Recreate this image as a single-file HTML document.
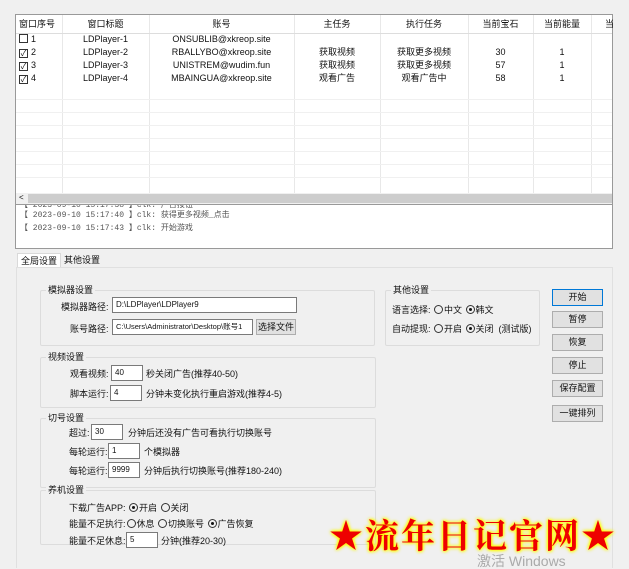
<!DOCTYPE html><html><head><meta charset="utf-8"><style>
*{box-sizing:border-box;margin:0;padding:0}
body{width:629px;height:568px;background:#f0f0f0;font-family:"Liberation Sans","Noto Sans CJK SC",sans-serif;font-size:9px;line-height:12px;color:#111;position:relative;overflow:hidden}
.a{position:absolute;white-space:nowrap}
.tbl{left:15px;top:14px;width:598px;height:191px;background:#fff;border:1px solid #999}
.vl{position:absolute;top:0;height:178px;width:1px;background:#e8e8e8}
.hl{position:absolute;left:0;width:596px;height:1px;background:#f0f0f0}
.c{position:absolute;text-align:center;font-size:9px;line-height:12px;white-space:nowrap}
.cb{display:inline-block;width:9px;height:9px;border:1px solid #333;vertical-align:-1px;margin-right:3px;font-size:8px;line-height:7px;text-align:center}
.grp{position:absolute;border:1px solid #dcdcdc;border-radius:2px}
.gt{position:absolute;top:-7px;left:5px;background:#f0f0f0;padding:0 2px}
.in{position:absolute;background:#fff;border:1px solid #7a7a7a;height:16px;padding:1px 3px;font-size:8px;line-height:12px;white-space:nowrap;overflow:hidden}
.btn{position:absolute;left:552px;width:51px;height:17px;border:1px solid #adadad;background:#e1e1e1;text-align:center;line-height:15px}
.r{display:inline-block;width:9px;height:9px;border:1px solid #333;border-radius:50%;vertical-align:-1px;position:relative;margin:0 1px}
.r.on::after{content:"";position:absolute;left:2px;top:2px;width:3px;height:3px;border-radius:50%;background:#111}
</style></head><body>
<div class="a tbl">
<div class="vl" style="left:46px"></div><div class="vl" style="left:133px"></div><div class="vl" style="left:278px"></div><div class="vl" style="left:364px"></div><div class="vl" style="left:452px"></div><div class="vl" style="left:517px"></div><div class="vl" style="left:575px"></div>
<div class="hl" style="top:18px;background:#ddd"></div>
<div class="hl" style="top:84px"></div><div class="hl" style="top:97px"></div><div class="hl" style="top:110px"></div><div class="hl" style="top:123px"></div><div class="hl" style="top:136px"></div><div class="hl" style="top:149px"></div><div class="hl" style="top:162px"></div>
<div class="c" style="left:3px;top:3px">窗口序号</div>
<div class="c" style="left:46px;width:87px;top:3px">窗口标题</div>
<div class="c" style="left:133px;width:145px;top:3px">账号</div>
<div class="c" style="left:278px;width:86px;top:3px">主任务</div>
<div class="c" style="left:364px;width:88px;top:3px">执行任务</div>
<div class="c" style="left:452px;width:65px;top:3px">当前宝石</div>
<div class="c" style="left:517px;width:58px;top:3px">当前能量</div>
<div class="c" style="left:589px;top:3px">当</div>
<div class="c" style="left:3px;top:18px"><span class="cb"></span>1</div>
<div class="c" style="left:3px;top:31px"><span class="cb">✓</span>2</div>
<div class="c" style="left:3px;top:44px"><span class="cb">✓</span>3</div>
<div class="c" style="left:3px;top:57px"><span class="cb">✓</span>4</div>
<div class="c" style="left:46px;width:87px;top:18px">LDPlayer-1</div>
<div class="c" style="left:46px;width:87px;top:31px">LDPlayer-2</div>
<div class="c" style="left:46px;width:87px;top:44px">LDPlayer-3</div>
<div class="c" style="left:46px;width:87px;top:57px">LDPlayer-4</div>
<div class="c" style="left:133px;width:145px;top:18px">ONSUBLIB@xkreop.site</div>
<div class="c" style="left:133px;width:145px;top:31px">RBALLYBO@xkreop.site</div>
<div class="c" style="left:133px;width:145px;top:44px">UNISTREM@wudim.fun</div>
<div class="c" style="left:133px;width:145px;top:57px">MBAINGUA@xkreop.site</div>
<div class="c" style="left:278px;width:86px;top:31px">获取视频</div>
<div class="c" style="left:278px;width:86px;top:44px">获取视频</div>
<div class="c" style="left:278px;width:86px;top:57px">观看广告</div>
<div class="c" style="left:364px;width:88px;top:31px">获取更多视频</div>
<div class="c" style="left:364px;width:88px;top:44px">获取更多视频</div>
<div class="c" style="left:364px;width:88px;top:57px">观看广告中</div>
<div class="c" style="left:452px;width:65px;top:31px">30</div>
<div class="c" style="left:452px;width:65px;top:44px">57</div>
<div class="c" style="left:452px;width:65px;top:57px">58</div>
<div class="c" style="left:517px;width:58px;top:31px">1</div>
<div class="c" style="left:517px;width:58px;top:44px">1</div>
<div class="c" style="left:517px;width:58px;top:57px">1</div>
<div style="position:absolute;left:0;top:178px;width:596px;height:11px;background:#f0f0f0"><div style="position:absolute;left:12px;top:1px;width:584px;height:9px;background:#cdcdcd"></div><span style="position:absolute;left:3px;top:0;font-size:8px;line-height:10px">&lt;</span></div>
</div>
<div class="a" style="left:15px;top:205px;width:598px;height:44px;background:#fff;border:1px solid #999;border-top:0;font-family:'Liberation Mono','Noto Sans CJK SC',monospace;font-size:8px;color:#555;padding-left:4px;line-height:13px">
<div style="height:4px;overflow:hidden;line-height:1px">【 2023-09-10 15:17:38 】clk: 广告按钮</div>
<div>【 2023-09-10 15:17:40 】clk: 获得更多视频_点击</div>
<div>【 2023-09-10 15:17:43 】clk: 开始游戏</div></div>
<div class="a" style="left:17px;top:253px;width:44px;height:14px;background:#fff;border:1px solid #d9d9d9;border-bottom:0;padding:1px 3px">全局设置</div>
<div class="a" style="left:64px;top:254px">其他设置</div>
<div class="a" style="left:16px;top:267px;width:597px;height:301px;background:#f0f0f0;border:1px solid #e0e0e0;border-bottom:0"></div>
<div class="grp" style="left:40px;top:290px;width:335px;height:56px"><span class="gt">模拟器设置</span></div>
<div class="a" style="left:61px;top:301px">模拟器路径:</div><div class="in" style="left:112px;top:297px;width:185px">D:\LDPlayer\LDPlayer9</div>
<div class="a" style="left:70px;top:323px">账号路径:</div><div class="in" style="left:112px;top:319px;width:141px;font-size:7.5px">C:\Users\Administrator\Desktop\账号1</div>
<div class="a" style="left:256px;top:319px;width:40px;height:16px;border:1px solid #adadad;background:#e1e1e1;text-align:center;line-height:14px">选择文件</div>
<div class="grp" style="left:385px;top:290px;width:155px;height:56px"><span class="gt">其他设置</span></div>
<div class="a" style="left:392px;top:304px">语言选择: <span class="r"></span>中文 <span class="r on"></span>韩文</div>
<div class="a" style="left:392px;top:323px">自动提现: <span class="r"></span>开启 <span class="r on"></span>关闭 &nbsp;(测试版)</div>
<div class="btn" style="top:289px;border-color:#0078d7">开始</div>
<div class="btn" style="top:311px">暂停</div>
<div class="btn" style="top:334px">恢复</div>
<div class="btn" style="top:357px">停止</div>
<div class="btn" style="top:380px">保存配置</div>
<div class="btn" style="top:405px">一键排列</div>
<div class="grp" style="left:40px;top:357px;width:336px;height:51px"><span class="gt">视频设置</span></div>
<div class="a" style="left:70px;top:368px">观看视频:</div><div class="in" style="left:111px;top:365px;width:32px">40</div><div class="a" style="left:146px;top:368px">秒关闭广告(推荐40-50)</div>
<div class="a" style="left:70px;top:388px">脚本运行:</div><div class="in" style="left:110px;top:385px;width:32px">4</div><div class="a" style="left:146px;top:388px">分钟未变化执行重启游戏(推荐4-5)</div>
<div class="grp" style="left:40px;top:418px;width:336px;height:70px"><span class="gt">切号设置</span></div>
<div class="a" style="left:69px;top:427px">超过:</div><div class="in" style="left:91px;top:424px;width:32px">30</div><div class="a" style="left:128px;top:427px">分钟后还没有广告可看执行切换账号</div>
<div class="a" style="left:69px;top:446px">每轮运行:</div><div class="in" style="left:108px;top:443px;width:32px">1</div><div class="a" style="left:144px;top:446px">个模拟器</div>
<div class="a" style="left:69px;top:465px">每轮运行:</div><div class="in" style="left:108px;top:462px;width:32px">9999</div><div class="a" style="left:144px;top:465px">分钟后执行切换账号(推荐180-240)</div>
<div class="grp" style="left:40px;top:490px;width:336px;height:55px"><span class="gt">养机设置</span></div>
<div class="a" style="left:69px;top:502px">下载广告APP: <span class="r on"></span>开启 <span class="r"></span>关闭</div>
<div class="a" style="left:69px;top:518px">能量不足执行:<span class="r"></span>休息 <span class="r"></span>切换账号 <span class="r on"></span>广告恢复</div>
<div class="a" style="left:69px;top:535px">能量不足休息:</div><div class="in" style="left:126px;top:532px;width:32px">5</div><div class="a" style="left:161px;top:535px">分钟(推荐20-30)</div>
<div class="a" style="left:329px;top:512px;font-family:'Noto Serif CJK SC',serif;font-weight:bold;font-size:34px;line-height:44px;letter-spacing:2px;color:#e00;text-shadow:0 0 3px #ff0,0 0 3px #ff0,0 0 4px #ff0">★流年日记官网★</div>
<div class="a" style="left:477px;top:553px;font-size:14px;line-height:16px;color:#aaa">激活 Windows</div>
</body></html>
